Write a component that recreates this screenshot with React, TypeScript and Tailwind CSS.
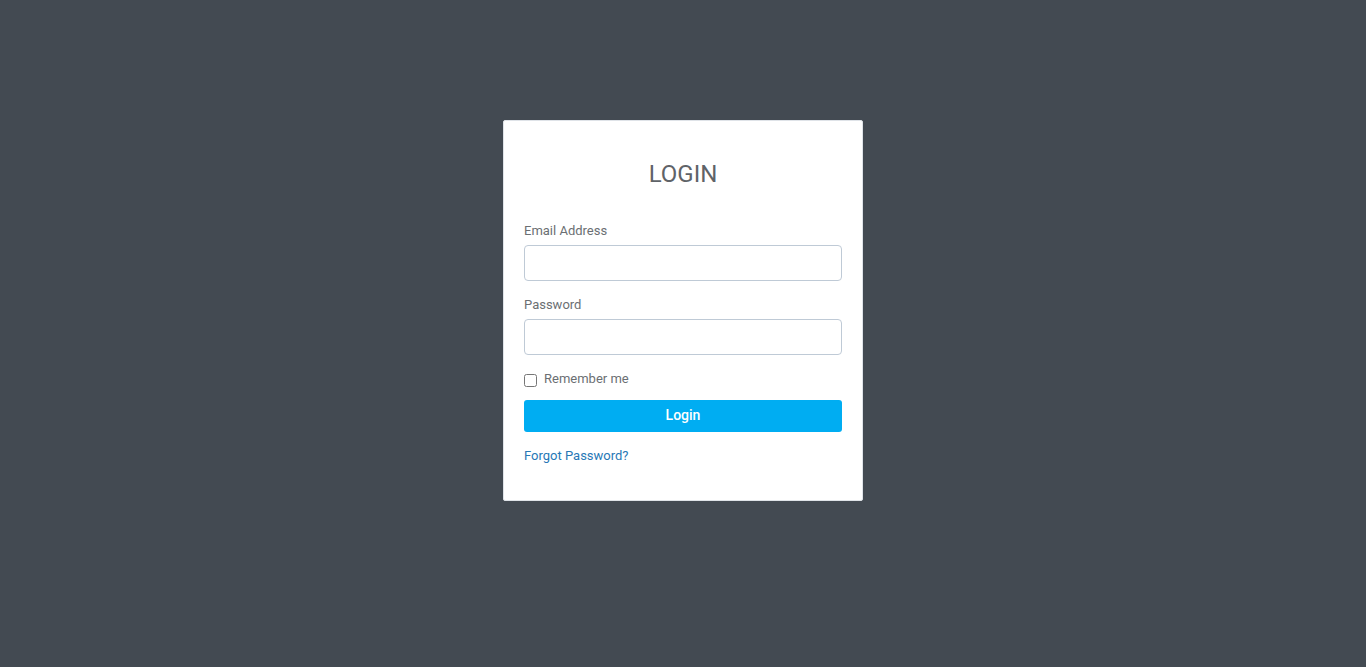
import React from 'react';

const App: React.FC = () => {
  return (
    <div className="min-h-screen w-full bg-[#434a52] font-['Roboto',sans-serif]">
      <div className="flex justify-center pt-[120px]">
        <div className="w-[360px] bg-white border border-[#dfe3e8] rounded-[2px] px-[20px] pt-[36px] pb-[35px]">
          <h1 className="text-center text-[24px] leading-[34px] text-[#5f6368] mb-[30px]">LOGIN</h1>

          <form onSubmit={(e) => e.preventDefault()}>
            <label className="block text-[13px] leading-[20px] text-[#6b6f73] mb-[4px]">Email Address</label>
            <input
              type="email"
              className="block w-full h-[36px] border border-[#bfcad6] rounded-[4px] px-3 text-[13px] outline-none mb-[14px]"
            />

            <label className="block text-[13px] leading-[20px] text-[#6b6f73] mb-[4px]">Password</label>
            <input
              type="password"
              className="block w-full h-[36px] border border-[#bfcad6] rounded-[4px] px-3 text-[13px] outline-none mb-[14px]"
            />

            <label className="flex items-center gap-[7px] text-[13px] leading-[20px] text-[#6b6f73] mb-[11px]">
              <input type="checkbox" className="w-[13px] h-[13px] mt-[2px]" />
              Remember me
            </label>

            <button
              type="submit"
              className="w-full h-[32px] pb-[2px] bg-[#00adf2] rounded-[3px] text-white text-[14px] font-medium leading-[20px]"
            >
              Login
            </button>

            <a href="#" className="block mt-[15px] text-[13px] leading-[18px] text-[#2778b6]">
              Forgot Password?
            </a>
          </form>
        </div>
      </div>
    </div>
  );
};

export default App;
